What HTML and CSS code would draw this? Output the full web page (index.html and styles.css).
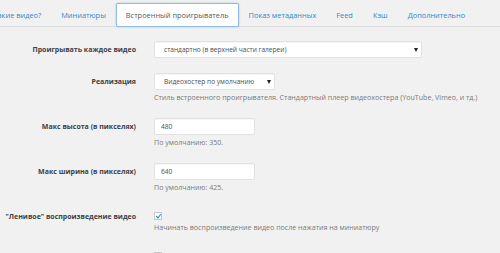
FILE: index.html
```html
<!DOCTYPE html>
<html>
<head>
    <title>Настройки видео</title>
    <link rel="stylesheet" href="styles.css">
</head>
<body>
    <nav class="nav-tabs">
        <a class="nav-tab" href="#">Какие видео?</a>
        <a class="nav-tab" href="#">Миниатюры</a>
        <a class="nav-tab nav-tab-active" href="#">Встроенный проигрыватель</a>
        <a class="nav-tab" href="#">Показ метаданных</a>
        <a class="nav-tab" href="#">Feed</a>
        <a class="nav-tab" href="#">Кэш</a>
        <a class="nav-tab" href="#">Дополнительно</a>
    </nav>

    <table class="form-table">
        <tr>
            <th>Проигрывать каждое видео</th>
            <td>
                <span class="select-wrap select-wide">
                    <select class="field">
                        <option>стандартно (в верхней части галереи)</option>
                    </select>
                </span>
            </td>
        </tr>
        <tr>
            <th>Реализация</th>
            <td>
                <span class="select-wrap select-narrow">
                    <select class="field">
                        <option>Видеохостер по умолчанию</option>
                    </select>
                </span>
                <p class="description">Стиль встроенного проигрывателя. Стандартный плеер видеохостера (YouTube, Vimeo, и тд.)</p>
            </td>
        </tr>
        <tr>
            <th>Макс высота (в пикселях)</th>
            <td>
                <input class="field text-field" type="text" value="480">
                <p class="description">По умолчанию: 350.</p>
            </td>
        </tr>
        <tr>
            <th>Макс ширина (в пикселях)</th>
            <td>
                <input class="field text-field" type="text" value="640">
                <p class="description">По умолчанию: 425.</p>
            </td>
        </tr>
        <tr>
            <th>"Ленивое" воспроизведение видео</th>
            <td>
                <input class="check" type="checkbox" checked>
                <p class="description">Начинать воспроизведение видео после нажатия на миниатюру</p>
            </td>
        </tr>
        <tr>
            <th></th>
            <td>
                <input class="check" type="checkbox">
            </td>
        </tr>
    </table>
</body>
</html>
```

FILE: styles.css
```css
body {
    font-family: "Open Sans", Arial, sans-serif;
    font-size: 7.5px;
    line-height: 11px;
    color: #32373c;
    background-color: #f1f1f1;
    margin: 0;
    padding: 0;
    overflow: hidden;
}
.nav-tabs {
    display: flex;
    align-items: flex-end;
    height: 26px;
    margin-left: -17px;
    border-bottom: 1px solid #dcdcdc;
}
.nav-tab {
    display: block;
    padding: 0 9px;
    height: 22px;
    line-height: 22px;
    border: 1px solid transparent;
    margin-bottom: -1px;
    font-size: 7.4px;
    color: #3188c6;
    text-decoration: none;
    white-space: nowrap;
}
.nav-tab-active {
    background: #ffffff;
    color: #555a5f;
    border-color: #8fbde6;
    border-radius: 2px;
    box-shadow: 0 0 2px rgba(30, 140, 190, 0.45);
}
.form-table {
    border-collapse: collapse;
    margin-top: 7px;
}
.form-table th {
    width: 136px;
    padding: 10px 0 0 0;
    vertical-align: top;
    text-align: right;
    font-size: 7px;
    font-weight: bold;
    color: #3c4146;
    white-space: nowrap;
}
.form-table td {
    padding: 7px 0 8px 18px;
    vertical-align: top;
}
.field {
    box-sizing: border-box;
    height: 17px;
    margin: 0;
    border: 1px solid #e2e2e2;
    border-radius: 2px;
    background: #ffffff;
    box-shadow: inset 0 1px 1px rgba(0, 0, 0, 0.04);
    font-family: "Open Sans", Arial, sans-serif;
    font-size: 6.6px;
    color: #4a4f54;
    display: block;
}
select.field {
    appearance: none;
    -webkit-appearance: none;
    width: 100%;
    padding: 0 16px 0 9px;
}
.select-wrap {
    position: relative;
    display: block;
}
.select-wrap::after {
    content: "";
    position: absolute;
    right: 4px;
    top: 7px;
    border-left: 2.5px solid transparent;
    border-right: 2.5px solid transparent;
    border-top: 4px solid #222;
}
.select-wide {
    width: 268px;
}
.select-narrow {
    width: 121px;
}
.text-field {
    width: 101px;
    padding: 0 6px;
}
.description {
    margin: 2px 0 0 0;
    color: #7a7a7a;
    font-size: 7.1px;
    white-space: nowrap;
}
.check {
    appearance: none;
    -webkit-appearance: none;
    display: block;
    width: 8px;
    height: 8px;
    margin: 4px 0 0 0;
    border: 1px solid #c5c8cc;
    background: #ffffff;
    box-sizing: border-box;
    position: relative;
}
.check:checked::before {
    content: "";
    position: absolute;
    left: 2px;
    top: 0;
    width: 2px;
    height: 4px;
    border-right: 1.5px solid #1e8cbe;
    border-bottom: 1.5px solid #1e8cbe;
    transform: rotate(40deg);
}
```
